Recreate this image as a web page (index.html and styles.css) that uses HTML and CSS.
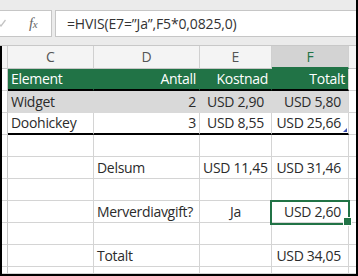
FILE: index.html
```html
<!DOCTYPE html>
<html lang="nb">
<head>
  <meta charset="UTF-8">
  <meta name="viewport" content="width=device-width, initial-scale=1.0">
  <title>HVIS-formel</title>
<link rel="stylesheet" href="styles.css">
</head>
<body>
<div class="app">
  <div class="formula-bar">
    <div class="name-box">
      <svg class="check" width="8" height="8" viewBox="0 0 8 8"><path d="M0.5 4.5 L3 7 L7.5 1" fill="none" stroke="#c4c4c4" stroke-width="1.3"/></svg>
      <span class="fx">f<i>x</i></span>
    </div>
    <div class="formula">=HVIS(E7=”Ja”,F5*0,0825,0)</div>
  </div>

  <div class="sheet">
    <div class="hd corner"></div>
    <div class="hd">C</div>
    <div class="hd">D</div>
    <div class="hd">E</div>
    <div class="hd active">F</div>
    <div class="hd last"></div>

    <div class="rh"></div>
    <div class="cell th">Element</div>
    <div class="cell th num">Antall</div>
    <div class="cell th num">Kostnad</div>
    <div class="cell th num end">Totalt</div>
    <div class="cell g"></div>

    <div class="rh"></div>
    <div class="cell band">Widget</div>
    <div class="cell band num">2</div>
    <div class="cell band usd">USD 2,90</div>
    <div class="cell band usd end">USD 5,80</div>
    <div class="cell g"></div>

    <div class="rh"></div>
    <div class="cell tl">Doohickey</div>
    <div class="cell tl num">3</div>
    <div class="cell tl usd">USD 8,55</div>
    <div class="cell tl usd grip">USD 25,66</div>
    <div class="cell g"></div>

    <div class="rh"></div>
    <div class="cell"></div>
    <div class="cell"></div>
    <div class="cell"></div>
    <div class="cell"></div>
    <div class="cell g"></div>

    <div class="rh"></div>
    <div class="cell"></div>
    <div class="cell">Delsum</div>
    <div class="cell usd">USD 11,45</div>
    <div class="cell usd">USD 31,46</div>
    <div class="cell g"></div>

    <div class="rh"></div>
    <div class="cell"></div>
    <div class="cell"></div>
    <div class="cell"></div>
    <div class="cell"></div>
    <div class="cell g"></div>

    <div class="rh"></div>
    <div class="cell"></div>
    <div class="cell">Merverdiavgift?</div>
    <div class="cell mid">Ja</div>
    <div class="cell usd sel">USD 2,60</div>
    <div class="cell g"></div>

    <div class="rh"></div>
    <div class="cell"></div>
    <div class="cell"></div>
    <div class="cell"></div>
    <div class="cell"></div>
    <div class="cell g"></div>

    <div class="rh"></div>
    <div class="cell"></div>
    <div class="cell">Totalt</div>
    <div class="cell"></div>
    <div class="cell usd">USD 34,05</div>
    <div class="cell g"></div>

    <div class="rh"></div>
    <div class="cell"></div>
    <div class="cell"></div>
    <div class="cell"></div>
    <div class="cell"></div>
    <div class="cell g"></div>
  </div>
</div>
</body>
</html>
```

FILE: styles.css
```css
* {
  box-sizing: border-box;
}

body {
  margin: 0;
  font-family: "Open Sans", "Noto Sans", sans-serif;
  background: #ffffff;
}

.app {
  width: 358px;
  height: 276px;
  overflow: hidden;
  border-right: 2px solid #000;
  background: #ffffff;
}

/* formula bar */
.formula-bar {
  height: 46px;
  background: #ebebeb;
  border-bottom: 1px solid #c8c8c8;
  display: flex;
  align-items: flex-start;
  padding-top: 10px;
}

.name-box {
  position: relative;
  width: 53px;
  height: 27px;
  margin-left: -1px;
  background: #fff;
  border: 1px solid #c6c6c6;
  padding-left: 29px;
  display: flex;
  align-items: center;
}

.check {
  position: absolute;
  left: -2px;
  top: 8px;
}

.fx {
  font-family: "Liberation Serif", serif;
  font-style: italic;
  font-size: 15px;
  color: #666;
  letter-spacing: -0.5px;
}

.fx i {
  font-size: 11px;
}

.formula {
  flex: 1;
  height: 27px;
  margin-left: 3px;
  background: #fff;
  border: 1px solid #c6c6c6;
  border-right: none;
  padding-left: 11px;
  font-size: 14px;
  letter-spacing: -0.15px;
  line-height: 25px;
  color: #333;
  white-space: nowrap;
}

/* sheet */
.sheet {
  display: grid;
  grid-template-columns: 6px 86px 106px 72px 77px 7px;
  grid-template-rows: 23px repeat(9, 22px) 7px;
  border-left: 2px solid #000;
  border-bottom: 2px solid #000;
}

.hd {
  background: #f4f4f4;
  border-right: 1px solid #d0d0d0;
  border-bottom: 1px solid #c6c6c6;
  text-align: center;
  font-size: 14px;
  line-height: 22px;
  color: #555;
}

.hd.active {
  background: #d3d3d3;
  color: #217346;
  border-bottom: 2px solid #217346;
}

.hd.last,
.cell.g {
  border-right: none;
}

.rh {
  border-right: 1px solid #c6c6c6;
  border-bottom: 1px solid #d4d4d4;
}

.cell {
  border-right: 1px solid #d4d4d4;
  border-bottom: 1px solid #d4d4d4;
  padding: 0 3px;
  font-size: 14px;
  letter-spacing: -0.3px;
  line-height: 21px;
  color: #2b2b2b;
  white-space: nowrap;
}

.num {
  text-align: right;
}

.usd {
  text-align: right;
  padding-right: 7px;
}

.mid {
  text-align: center;
}

.th {
  background: #217346;
  color: #fff;
  border-right-color: #217346;
  border-bottom: 2px solid #000;
  line-height: 20px;
}

.band {
  background: #d9d9d9;
  border-right-color: #d9d9d9;
  border-bottom-color: #d9d9d9;
}

.th.end,
.band.end {
  border-right-color: #d4d4d4;
}

.tl {
  border-bottom: 2px solid #000;
  line-height: 20px;
}

.grip {
  position: relative;
}

.grip::after {
  content: "";
  position: absolute;
  right: 1px;
  bottom: 1px;
  border-left: 4px solid transparent;
  border-bottom: 4px solid #3c4fb0;
}

.sel {
  position: relative;
}

.sel::before {
  content: "";
  position: absolute;
  left: -2px;
  top: -1px;
  right: -2px;
  bottom: -3px;
  border: 2px solid #217346;
}

.sel::after {
  content: "";
  position: absolute;
  right: -4px;
  bottom: -4px;
  width: 7px;
  height: 7px;
  background: #217346;
  border: 1px solid #fff;
}
```
